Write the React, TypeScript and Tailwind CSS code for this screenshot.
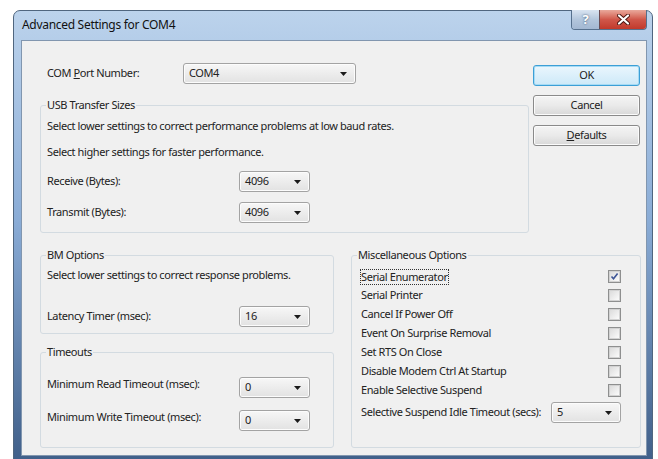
import type { ReactNode } from "react";

// Arrow used by every drop-down list
function Arrow() {
  return (
    <svg width="7" height="4" viewBox="0 0 7 4" className="shrink-0">
      <path d="M0 0h7L3.5 4z" fill="#1b1b1b" />
    </svg>
  );
}

function Combo({ value, className = "" }: { value: string; className?: string }) {
  return (
    <div
      className={`flex h-[21px] shrink-0 items-center justify-between rounded-[3px] border border-[#a3a3a3] bg-linear-to-b from-[#f7f7f7] to-[#e2e2e2] pl-[5px] pr-[8px] shadow-[inset_0_0_0_1px_#fcfcfc] ${className}`}
    >
      <span>{value}</span>
      <Arrow />
    </div>
  );
}

function Button({ children, primary = false }: { children: ReactNode; primary?: boolean }) {
  return (
    <button
      type="button"
      className={
        primary
          ? "h-[21px] w-full rounded-[3px] border border-[#3c9fd6] bg-linear-to-b from-[#eaf6fd] to-[#cde9f8] shadow-[inset_0_0_0_1px_#a6dbf5]"
          : "h-[21px] w-full rounded-[3px] border border-[#8a8a8a] bg-linear-to-b from-[#f4f4f4] via-[#eaeaea] to-[#d8d8d8] shadow-[inset_0_0_0_1px_#fbfbfb]"
      }
    >
      {children}
    </button>
  );
}

// group box: the legend sits on the top border, the body carries its own padding
function Group({ title, className = "", children }: { title: string; className?: string; children: ReactNode }) {
  return (
    <fieldset className={`min-w-0 shrink-0 rounded-[3px] border border-[#d3dbe1] ${className}`}>
      <legend className="ml-[5px] px-[1px] leading-[16px]">{title}</legend>
      {children}
    </fieldset>
  );
}

function Check({ checked = false }: { checked?: boolean }) {
  return (
    <div className="flex h-[13px] w-[13px] shrink-0 items-center justify-center border border-[#8e8f8f] bg-[#f4f4f4]">
      <div className="flex h-[11px] w-[11px] items-center justify-center border border-[#d2d2d2] bg-linear-to-br from-[#dcdcdc] to-[#fbfbfb]">
        {checked && (
          <svg width="9" height="9" viewBox="0 0 9 9">
            <path d="M1.5 4.5l2 2.2L7.6 1.6" fill="none" stroke="#3d5596" strokeWidth="1.6" />
          </svg>
        )}
      </div>
    </div>
  );
}

const misc = [
  "Serial Printer",
  "Cancel If Power Off",
  "Event On Surprise Removal",
  "Set RTS On Close",
  "Disable Modem Ctrl At Startup",
  "Enable Selective Suspend",
];

export default function App() {
  return (
    <div className="h-[459px] w-[658px] overflow-hidden bg-white pl-[13px] pt-[10px] font-['Noto_Sans',sans-serif] text-[11px] tracking-[-0.4px] whitespace-nowrap text-[#222]">
      {/* window frame */}
      <div className="flex h-[470px] w-[640px] flex-col rounded-t-[7px] border border-[#50667f] bg-linear-to-b from-[#bcd3ec] via-[#8aacd6] via-45% to-[#3b5a84] px-[7px] pr-[5px]">
        {/* caption */}
        <div className="flex h-[29px] items-start justify-between">
          <span className="mt-[6px] pl-[1px] text-[12px] leading-[16px] tracking-[-0.3px] text-[#111]">Advanced Settings for COM4</span>
          <div className="-mt-[1px] flex h-[20px] overflow-hidden rounded-b-[4px] border border-t-0 border-[#56708d]">
            <div className="flex w-[27px] items-center justify-center bg-linear-to-b from-[#d9e4f1] via-[#b3c6dc] to-[#a3b8d2] text-[13px] font-bold text-white [text-shadow:0_0_2px_#2c4463]">
              ?
            </div>
            <div className="flex w-[47px] items-center justify-center border-l border-[#6b4b52] bg-linear-to-b from-[#e9a99c] via-[#d0574a] to-[#c1392b]">
              <svg width="13" height="11" viewBox="0 0 13 11">
                <path d="M2 1.5l9 8M11 1.5l-9 8" stroke="#4a1610" strokeWidth="4" strokeLinecap="round" />
                <path d="M2 1.5l9 8M11 1.5l-9 8" stroke="#fff" strokeWidth="2.2" strokeLinecap="round" />
              </svg>
            </div>
          </div>
        </div>

        {/* client area */}
        <div className="h-[416px] w-[626px] border border-[#8196af] bg-[#f0f0f0] pl-[18px] pt-[22px]">
          <div className="flex">
            <div className="w-[489px] shrink-0">
              <div className="flex h-[21px] items-center pl-[7px]">
                <span className="w-[136px]">
                  COM <span className="underline">P</span>ort Number:
                </span>
                <Combo value="COM4" className="w-[173px]" />
              </div>

              <Group title="USB Transfer Sizes" className="mt-[13px] h-[136px] w-full">
                <div className="pl-[6px]">
                  <p className="mt-[5px] leading-[16px]">Select lower settings to correct performance problems at low baud rates.</p>
                  <p className="mt-[10px] leading-[16px]">Select higher settings for faster performance.</p>
                  <div className="mt-[11px] flex h-[21px] items-center">
                    <span className="w-[192px]">Receive (Bytes):</span>
                    <Combo value="4096" className="w-[71px]" />
                  </div>
                  <div className="mt-[10px] flex h-[21px] items-center">
                    <span className="w-[192px]">Transmit (Bytes):</span>
                    <Combo value="4096" className="w-[71px]" />
                  </div>
                </div>
              </Group>
            </div>

            <div className="ml-[4px] flex w-[107px] shrink-0 flex-col gap-[9px] pt-[2px]">
              <Button primary>OK</Button>
              <Button>Cancel</Button>
              <Button>
                <span className="underline">D</span>efaults
              </Button>
            </div>
          </div>

          <div className="mt-[14px] flex">
            <div className="flex w-[294px] shrink-0 flex-col">
              <Group title="BM Options" className="h-[87px]">
                <div className="pl-[6px]">
                  <p className="mt-[4px] leading-[16px]">Select lower settings to correct response problems.</p>
                  <div className="mt-[23px] flex h-[21px] items-center">
                    <span className="w-[192px]">Latency Timer (msec):</span>
                    <Combo value="16" className="w-[71px]" />
                  </div>
                </div>
              </Group>

              <Group title="Timeouts" className="mt-[10px] h-[104px]">
                <div className="pl-[6px]">
                  <div className="mt-[17px] flex h-[21px] items-center">
                    <span className="w-[192px] pb-[6px]">Minimum Read Timeout (msec):</span>
                    <Combo value="0" className="w-[71px]" />
                  </div>
                  <div className="mt-[12px] flex h-[21px] items-center">
                    <span className="w-[192px] pb-[6px]">Minimum Write Timeout (msec):</span>
                    <Combo value="0" className="w-[71px]" />
                  </div>
                </div>
              </Group>
            </div>

            <Group title="Miscellaneous Options" className="ml-[17px] h-[201px] w-[290px]">
              <div className="pl-[9px] pr-[19px]">
                <div className="mt-[4px]">
                  <div className="flex h-[19px] items-center justify-between">
                    <span className="leading-[14px] outline-1 outline-dotted outline-[#333]">Serial Enumerator</span>
                    <Check checked />
                  </div>
                  {misc.map((label) => (
                    <div key={label} className="flex h-[19px] items-center justify-between">
                      <span>{label}</span>
                      <Check />
                    </div>
                  ))}
                </div>
                <div className="mt-[3px] flex h-[19px] items-center justify-between">
                  <span>Selective Suspend Idle Timeout (secs):</span>
                  <Combo value="5" className="h-[19px] w-[70px]" />
                </div>
              </div>
            </Group>
          </div>
        </div>
      </div>
    </div>
  );
}
